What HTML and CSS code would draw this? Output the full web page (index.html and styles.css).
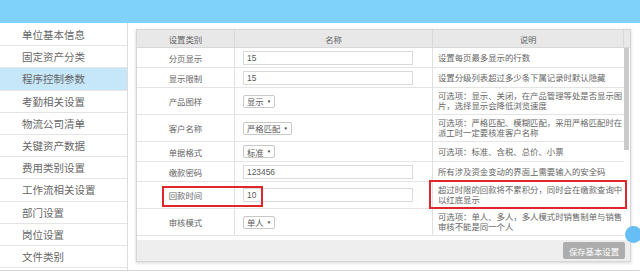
FILE: index.html
```html
<!DOCTYPE html>
<html lang="zh-CN">
<head>
    <meta charset="UTF-8">
    <meta name="viewport" content="width=device-width, initial-scale=1.0">
    <title>程序控制参数</title>
    <link rel="stylesheet" href="styles.css">
</head>
<body>
    <div class="topbar"></div>

    <div class="layout">
        <ul class="sidebar">
            <li>单位基本信息</li>
            <li>固定资产分类</li>
            <li class="active">程序控制参数</li>
            <li>考勤相关设置</li>
            <li>物流公司清单</li>
            <li>关键资产数据</li>
            <li>费用类别设置</li>
            <li>工作流相关设置</li>
            <li>部门设置</li>
            <li>岗位设置</li>
            <li>文件类别</li>
        </ul>

        <div class="main">
            <div class="panel">
                <div class="thead">
                    <div class="th">设置类别</div>
                    <div class="th">名称</div>
                    <div class="th">说明</div>
                    <div class="th-end"></div>
                </div>

                <div class="tbody">
                    <div class="rows">
                        <div class="row">
                            <div class="cell label">分页显示</div>
                            <div class="cell value"><span class="input">15</span></div>
                            <div class="cell desc">设置每页最多显示的行数</div>
                        </div>
                        <div class="row">
                            <div class="cell label">显示限制</div>
                            <div class="cell value"><span class="input">15</span></div>
                            <div class="cell desc">设置分级列表超过多少条下属记录时默认隐藏</div>
                        </div>
                        <div class="row tall">
                            <div class="cell label">产品图样</div>
                            <div class="cell value"><span class="select">显示<i>▼</i></span></div>
                            <div class="cell desc">可选项：显示、关闭，在产品管理等处是否显示图片，选择显示会降低浏览速度</div>
                        </div>
                        <div class="row tall">
                            <div class="cell label">客户名称</div>
                            <div class="cell value"><span class="select">严格匹配<i>▼</i></span></div>
                            <div class="cell desc">可选项：严格匹配、模糊匹配，采用严格匹配时在派工时一定要核准客户名称</div>
                        </div>
                        <div class="row">
                            <div class="cell label">单据格式</div>
                            <div class="cell value"><span class="select">标准<i>▼</i></span></div>
                            <div class="cell desc">可选项：标准、含税、总价、小票</div>
                        </div>
                        <div class="row">
                            <div class="cell label">缴款密码</div>
                            <div class="cell value"><span class="input">123456</span></div>
                            <div class="cell desc">所有涉及资金变动的界面上需要输入的安全码</div>
                        </div>
                        <div class="row tall">
                            <div class="cell label">回款时间</div>
                            <div class="cell value"><span class="input">10</span></div>
                            <div class="cell desc">超过时限的回款将不累积分，同时会在缴款查询中以红底显示</div>
                        </div>
                        <div class="row tall">
                            <div class="cell label">审核模式</div>
                            <div class="cell value"><span class="select">单人<i>▼</i></span></div>
                            <div class="cell desc">可选项：单人、多人，多人模式时销售制单与销售审核不能是同一个人</div>
                        </div>
                    </div>
                    <div class="scrollbar"><div class="thumb"></div></div>
                </div>

                <div class="tfoot">
                    <button class="save">保存基本设置</button>
                </div>
            </div>
        </div>
    </div>

    <!-- 标注框 -->
    <div class="mark mark-name"></div>
    <div class="mark mark-desc"></div>

    <div class="float-btn"></div>
</body>
</html>
```

FILE: styles.css
```css
body {
    margin: 0;
    width: 640px;
    height: 273px;
    overflow: hidden;
    position: relative;
    background: #fff;
    font-family: "Liberation Sans", "Noto Sans CJK SC", sans-serif;
    color: #666;
}
.topbar {
    height: 23px;
    background: #7fd3fb;
}
.layout {
    display: flex;
    height: 247px;
    border-bottom: 1px solid #d6d6d6;
}

/* 左侧菜单 */
.sidebar {
    width: 127px;
    margin: 0;
    padding: 1px 0 0;
    list-style: none;
    border-right: 1px solid #dcdcdc;
}
.sidebar li {
    box-sizing: border-box;
    height: 22.2px;
    display: flex;
    align-items: center;
    padding-left: 22px;
    font-size: 10.5px;
    border-bottom: 1px solid #e4e4e4;
}
.sidebar li.active {
    background: #c6e6fa;
}

/* 右侧面板 */
.main {
    flex: 1;
    padding: 6px 9px 0 8px;
}
.panel {
    box-sizing: border-box;
    height: 233px;
    display: flex;
    flex-direction: column;
    border: 1px solid #d6d6d6;
    background: #eeeeee;
    box-shadow: 0 1px 3px rgba(0, 0, 0, 0.18);
    font-size: 8.4px;
}
.thead {
    box-sizing: border-box;
    height: 18px;
    display: grid;
    grid-template-columns: 98px 198px 1fr 6px;
    background: #e8e8e8;
    border-bottom: 1px solid #d8d8d8;
}
.th {
    display: flex;
    align-items: center;
    justify-content: center;
    border-right: 1px solid #d8d8d8;
}
.tbody {
    height: 192px;
    display: flex;
    background: #fff;
}
.rows {
    flex: 1;
}
.row {
    box-sizing: border-box;
    height: 20px;
    display: grid;
    grid-template-columns: 98px 198px 1fr;
    border-bottom: 1px solid #e4e4e4;
}
.row.tall {
    height: 27px;
}
.cell {
    display: flex;
    align-items: center;
}
.label {
    justify-content: center;
    border-right: 1px solid #e0e0e0;
}
.value {
    padding-left: 8px;
    border-right: 1px solid #e0e0e0;
}
.desc {
    padding-left: 5px;
    line-height: 10px;
}
.input {
    box-sizing: border-box;
    width: 170px;
    height: 14px;
    padding-left: 3px;
    display: flex;
    align-items: center;
    border: 1px solid #dadada;
    color: #5a5a5a;
}
.select {
    box-sizing: border-box;
    height: 13px;
    padding: 0 3px;
    display: inline-flex;
    align-items: center;
    gap: 3px;
    border: 1px solid #c8c8c8;
    border-radius: 2px;
    color: #5a5a5a;
}
.select i {
    font-style: normal;
    font-size: 4.5px;
    color: #444;
}
.scrollbar {
    width: 6px;
}
.thumb {
    width: 5px;
    height: 102px;
    background: #cacaca;
}
.tfoot {
    flex: 1;
    display: flex;
    align-items: center;
    justify-content: flex-end;
    padding-right: 5px;
}
.save {
    width: 62px;
    height: 17px;
    padding: 0;
    border: none;
    border-radius: 2px;
    background: #adadad;
    color: #fff;
    font-family: inherit;
    font-size: 8.4px;
}

/* 红色标注 */
.mark {
    position: absolute;
    box-sizing: border-box;
    border: 2px solid #e0262b;
}
.mark-name {
    left: 162px;
    top: 186px;
    width: 101px;
    height: 21px;
}
.mark-desc {
    left: 429px;
    top: 180px;
    width: 198px;
    height: 29px;
}
.float-btn {
    position: absolute;
    left: 625px;
    top: 226px;
    width: 17px;
    height: 17px;
    border-radius: 50%;
    background: #66bef4;
}
```
